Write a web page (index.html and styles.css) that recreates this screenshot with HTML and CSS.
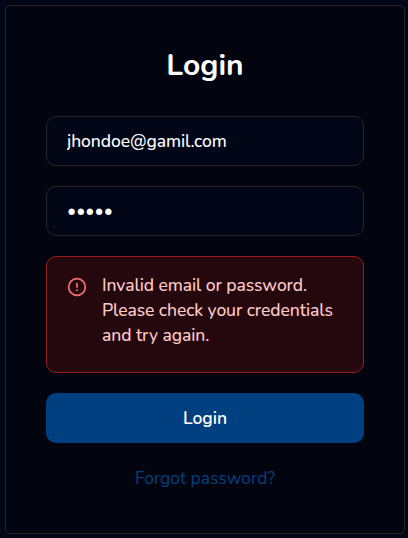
FILE: index.html
```
<!DOCTYPE html>
<html lang="en">
<head>
<meta charset="utf-8">
<title>Login</title>
<link rel="stylesheet" href="styles.css">
</head>
<body>
<main class="card">
  <h1 class="title">Login</h1>
  <form class="form">
    <input class="field" type="text" value="jhondoe@gamil.com" aria-label="Email">
    <input class="field password" type="password" value="12345" aria-label="Password">
    <div class="alert" role="alert">
      <svg class="alert-icon" viewBox="0 0 20 20" fill="none" stroke="currentColor" stroke-width="1.7">
        <circle cx="10" cy="10" r="8.3"/>
        <path d="M10 5.9v4.9M10 12.4v1.7"/>
      </svg>
      <p class="alert-text">Invalid email or password.<br>Please check your credentials<br>and try again.</p>
    </div>
    <button class="submit" type="button">Login</button>
  </form>
  <a class="forgot">Forgot password?</a>
</main>
</body>
</html>
```
FILE: styles.css
```
* { box-sizing: border-box; }
body {
  margin: 0;
  padding: 5px 3px 4px 5px;
  background: #020617;
  color: #fff;
  font: 17.5px/25px Nunito, Lato, "Noto Sans", sans-serif;
}
.card {
  width: 400px;
  height: 529px;
  padding: 40px;
  border: 1px solid #262626;
  border-radius: 5px;
  background: #02050f;
}
.title {
  margin: 0 0 30px;
  font-size: 30px;
  line-height: 40px;
  font-weight: 700;
  text-align: center;
}
.form {
  display: flex;
  flex-direction: column;
  gap: 20px;
}
.field {
  width: 100%;
  height: 50px;
  padding: 0 20px;
  border: 1px solid #262626;
  border-radius: 10px;
  background: #020617;
  color: #fff;
  font: inherit;
  font-weight: 500;
  letter-spacing: -0.07px;
}
.password { letter-spacing: 0; }
.alert {
  display: flex;
  gap: 15px;
  height: 117px;
  padding: 16px 20px;
  border: 1px solid #991b1b;
  border-radius: 10px;
  background: #25080d;
  color: #fecaca;
}
.alert-icon {
  flex: none;
  width: 20px;
  height: 20px;
  margin-top: 4px;
  color: #f87171;
}
.alert-text {
  margin: 0;
  font-weight: 500;
  letter-spacing: -0.07px;
  white-space: nowrap;
}
.submit {
  height: 50px;
  padding: 0;
  border: 0;
  border-radius: 10px;
  background: #004080;
  color: #fff;
  font: inherit;
  font-weight: 600;
}
.forgot {
  display: block;
  margin-top: 23px;
  color: #004080;
  text-align: center;
}
```
